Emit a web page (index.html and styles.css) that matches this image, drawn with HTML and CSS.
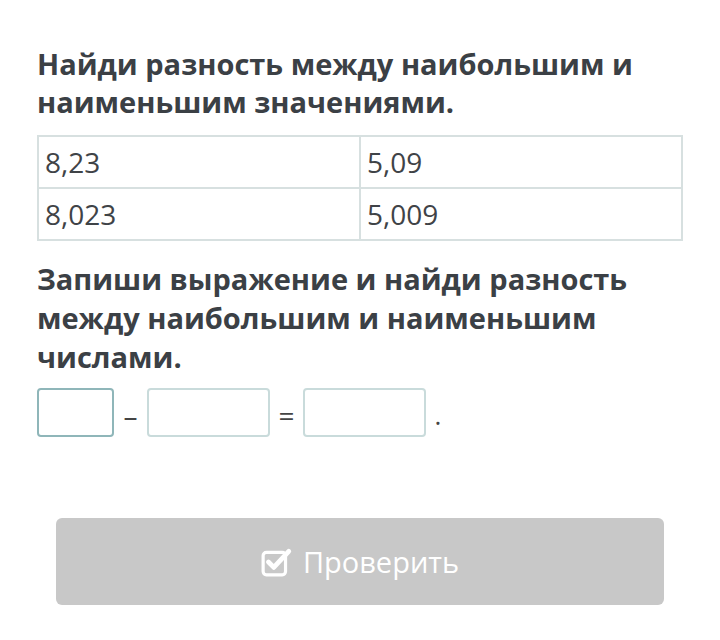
FILE: index.html
```html
<!DOCTYPE html>
<html>
<head>
    <title>Найди разность</title>
    <meta charset="UTF-8">
    <link rel="stylesheet" href="styles.css">
</head>
<body>
    <div class="task">
        <h3>Найди разность между наибольшим и наименьшим значениями.</h3>
        <table class="values">
            <tr><td>8,23</td><td>5,09</td></tr>
            <tr><td>8,023</td><td>5,009</td></tr>
        </table>

        <h3 class="second">Запиши выражение и найди разность между наибольшим и наименьшим числами.</h3>
        <div class="expr">
            <input type="text" class="box small focused">
            <span class="op">–</span>
            <input type="text" class="box">
            <span class="op">=</span>
            <input type="text" class="box">
            <span class="dot">.</span>
        </div>

        <button class="check">
            <svg width="32" height="30" viewBox="0 0 30 28">
                <rect x="2" y="5" width="21" height="21" rx="3" fill="none" stroke="#fff" stroke-width="3"/>
                <path d="M7 14 L12 19 L26 4" fill="none" stroke="#fff" stroke-width="4.5" stroke-linecap="round" stroke-linejoin="round"/>
            </svg>
            Проверить
        </button>
    </div>
</body>
</html>
```

FILE: styles.css
```css
body { margin: 0; background: #fff; font-family: "Open Sans", "Noto Sans", sans-serif; color: #3a3f44; }
.task { width: 646px; padding: 45px 0 0 37px; }
h3 { font-size: 29px; line-height: 38px; font-weight: 700; margin: 0 0 14px 0; color: #3b4045; }
h3.second { margin: 18px 0 11px 0; line-height: 39px; }
.values { width: 100%; border-collapse: collapse; border: 2px solid #d7e0e0; }
.values td { width: 50%; height: 50px; padding: 0 6px; border: 2px solid #d7e0e0; font-size: 28px; color: #3f4347; }
.expr { display: flex; align-items: center; height: 50px; }
.box { box-sizing: border-box; width: 123px; height: 49px; border: 2px solid #c9dbdb; border-radius: 4px; background: #fff; padding: 0; }
.box.small { width: 77px; }
.box.focused { border-color: #8fb6b9; }
.op { width: 33px; text-align: center; font-size: 28px; color: #444; padding-top: 6px; }
.dot { width: 24px; text-align: center; font-size: 26px; color: #444; padding-top: 6px; }
.check { display: flex; align-items: center; justify-content: center; gap: 10px; width: 608px; height: 87px; margin: 81px 0 0 19px; background: #c8c8c8; border: none; border-radius: 6px; color: #fff; font-family: "Open Sans", sans-serif; font-size: 29px; cursor: pointer; }
```
